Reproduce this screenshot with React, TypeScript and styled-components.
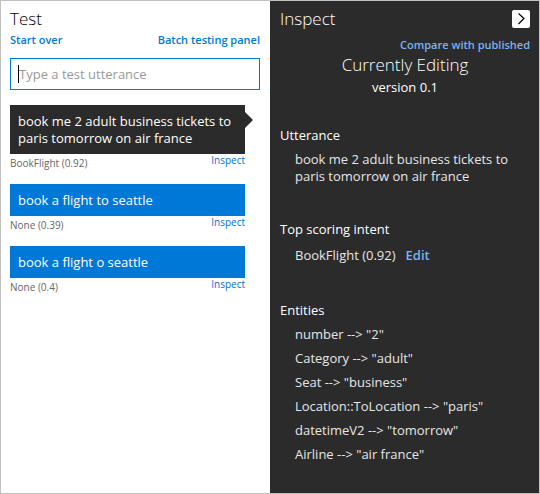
import React from "react";
import styled, { createGlobalStyle } from "styled-components";

const GlobalStyle = createGlobalStyle`
  *, *::before, *::after { box-sizing: border-box; }
  body {
    margin: 0;
    background: #fff;
    color: #000;
    font-family: "Segoe UI", "Open Sans", "Noto Sans", sans-serif;
    font-size: 13px;
    line-height: 17px;
  }
  h1, h2, h3, p, ul { margin: 0; padding: 0; font-weight: 400; }
  ul { list-style: none; }
  button { font: inherit; padding: 0; border: 0; background: none; cursor: pointer; }
`;

const Frame = styled.main`
  display: grid;
  grid-template-columns: 1fr 1fr;
  min-height: 100vh;
  border: 1px solid #c0c0c0;
`;

const TestPanel = styled.section`
  padding: 6px 10px 24px 9px;
`;

const InspectPanel = styled.section`
  padding: 6px 9px 24px 10px;
  background: #2b2b2b;
  color: #fff;
`;

const PanelTitle = styled.h1`
  font-size: 17px;
  line-height: 24px;
  font-weight: 300;
`;

const LinkRow = styled.nav<{ $end?: boolean }>`
  display: flex;
  justify-content: ${(p) => (p.$end ? "flex-end" : "space-between")};
`;

const ActionLink = styled.a<{ $onDark?: boolean; $large?: boolean }>`
  color: ${(p) => (p.$onDark ? "#78b4f0" : "#0078d7")};
  font-size: ${(p) => (p.$large ? "13px" : "11px")};
  line-height: 17px;
  font-weight: 600;
  text-decoration: none;
`;

const Field = styled.label`
  display: flex;
  align-items: center;
  height: 32px;
  margin: 10px 0 15px;
  padding: 0 7px;
  border: 1px solid #0078d7;
`;

const Caret = styled.span`
  width: 1px;
  height: 18px;
  background: #000;
`;

const FieldInput = styled.input`
  flex: 1;
  min-width: 0;
  padding: 0;
  border: 0;
  outline: 0;
  background: none;
  font: inherit;
  color: #000;
  &::placeholder { color: #999; opacity: 1; }
`;

const UtteranceList = styled.ul`
  display: flex;
  flex-direction: column;
  gap: 10px;
  padding-right: 15px;
`;

const Bubble = styled.p<{ $active?: boolean }>`
  position: relative;
  padding: 8px 7px 7px 8px;
  background: ${(p) => (p.$active ? "#2b2b2b" : "#0078d7")};
  color: #fff;
  &::after {
    content: "";
    display: ${(p) => (p.$active ? "block" : "none")};
    position: absolute;
    top: 7px;
    left: 100%;
    border: 8px solid transparent;
    border-left-color: #2b2b2b;
    border-right-width: 0;
  }
`;

const BubbleFooter = styled.div`
  display: flex;
  justify-content: space-between;
  align-items: flex-start;
  height: 20px;
  font-size: 10px;
`;

const Score = styled.span`
  padding-top: 1px;
  color: #666;
`;

const InspectButton = styled.button`
  color: #0072d0;
  line-height: 13px;
`;

const InspectHeader = styled.header`
  display: flex;
  justify-content: space-between;
  align-items: center;
  margin-bottom: 5px;
`;

const CollapseButton = styled.button`
  display: flex;
  align-items: center;
  justify-content: center;
  width: 18px;
  height: 18px;
  border-radius: 2px;
  background: #fff;
  color: #000;
`;

const VersionBlock = styled.div`
  margin-bottom: 29px;
  text-align: center;
`;

const VersionTitle = styled.h2`
  font-size: 17px;
  line-height: 24px;
  font-weight: 300;
`;

const VersionNumber = styled.p`
  padding-top: 1px;
  line-height: 19px;
`;

const Section = styled.section`
  & + & { margin-top: 35px; }
`;

const SectionTitle = styled.h3`
  margin-bottom: 3px;
  font-size: 13px;
  line-height: 18px;
`;

const SectionBody = styled.div`
  padding-left: 15px;
  color: #e6e6e6;
`;

const UtteranceText = styled.p`
  padding-top: 4px;
`;

const IntentRow = styled.div`
  display: flex;
  gap: 10px;
  padding: 6px 0 2px;
`;

const EntityItem = styled.li`
  line-height: 24px;
`;

const utterances = [
  {
    text: "book me 2 adult business tickets to paris tomorrow on air france",
    score: "BookFlight (0.92)",
    active: true,
  },
  { text: "book a flight to seattle", score: "None (0.39)" },
  { text: "book a flight o seattle", score: "None (0.4)" },
];

const entities = [
  ["number", "2"],
  ["Category", "adult"],
  ["Seat", "business"],
  ["Location::ToLocation", "paris"],
  ["datetimeV2", "tomorrow"],
  ["Airline", "air france"],
];

export default function App() {
  return (
    <>
      <GlobalStyle />
      <Frame>
        <TestPanel>
          <PanelTitle>Test</PanelTitle>
          <LinkRow>
            <ActionLink href="#start">Start over</ActionLink>
            <ActionLink href="#batch">Batch testing panel</ActionLink>
          </LinkRow>
          <Field>
            <Caret />
            <FieldInput
              type="text"
              aria-label="Test utterance"
              placeholder="Type a test utterance"
            />
          </Field>
          <UtteranceList>
            {utterances.map((u) => (
              <li key={u.text}>
                <Bubble $active={u.active}>{u.text}</Bubble>
                <BubbleFooter>
                  <Score>{u.score}</Score>
                  <InspectButton type="button">Inspect</InspectButton>
                </BubbleFooter>
              </li>
            ))}
          </UtteranceList>
        </TestPanel>

        <InspectPanel>
          <InspectHeader>
            <PanelTitle as="h2">Inspect</PanelTitle>
            <CollapseButton type="button" aria-label="Collapse inspect panel">
              <svg width="18" height="18" viewBox="0 0 18 18" fill="none">
                <path d="M6.500 3.500 12 8.500l-5.500 5.500" stroke="currentColor" strokeWidth="1.200" />
              </svg>
            </CollapseButton>
          </InspectHeader>
          <LinkRow $end>
            <ActionLink $onDark href="#compare">Compare with published</ActionLink>
          </LinkRow>
          <VersionBlock>
            <VersionTitle>Currently Editing</VersionTitle>
            <VersionNumber>version 0.1</VersionNumber>
          </VersionBlock>
          <Section>
            <SectionTitle>Utterance</SectionTitle>
            <SectionBody>
              <UtteranceText>
                book me 2 adult business tickets to paris tomorrow on air france
              </UtteranceText>
            </SectionBody>
          </Section>
          <Section>
            <SectionTitle>Top scoring intent</SectionTitle>
            <SectionBody>
              <IntentRow>
                <span>BookFlight (0.92)</span>
                <ActionLink $onDark $large href="#edit">Edit</ActionLink>
              </IntentRow>
            </SectionBody>
          </Section>
          <Section>
            <SectionTitle>Entities</SectionTitle>
            <SectionBody as="ul">
              {entities.map(([name, value]) => (
                <EntityItem key={name}>{`${name} --> "${value}"`}</EntityItem>
              ))}
            </SectionBody>
          </Section>
        </InspectPanel>
      </Frame>
    </>
  );
}
